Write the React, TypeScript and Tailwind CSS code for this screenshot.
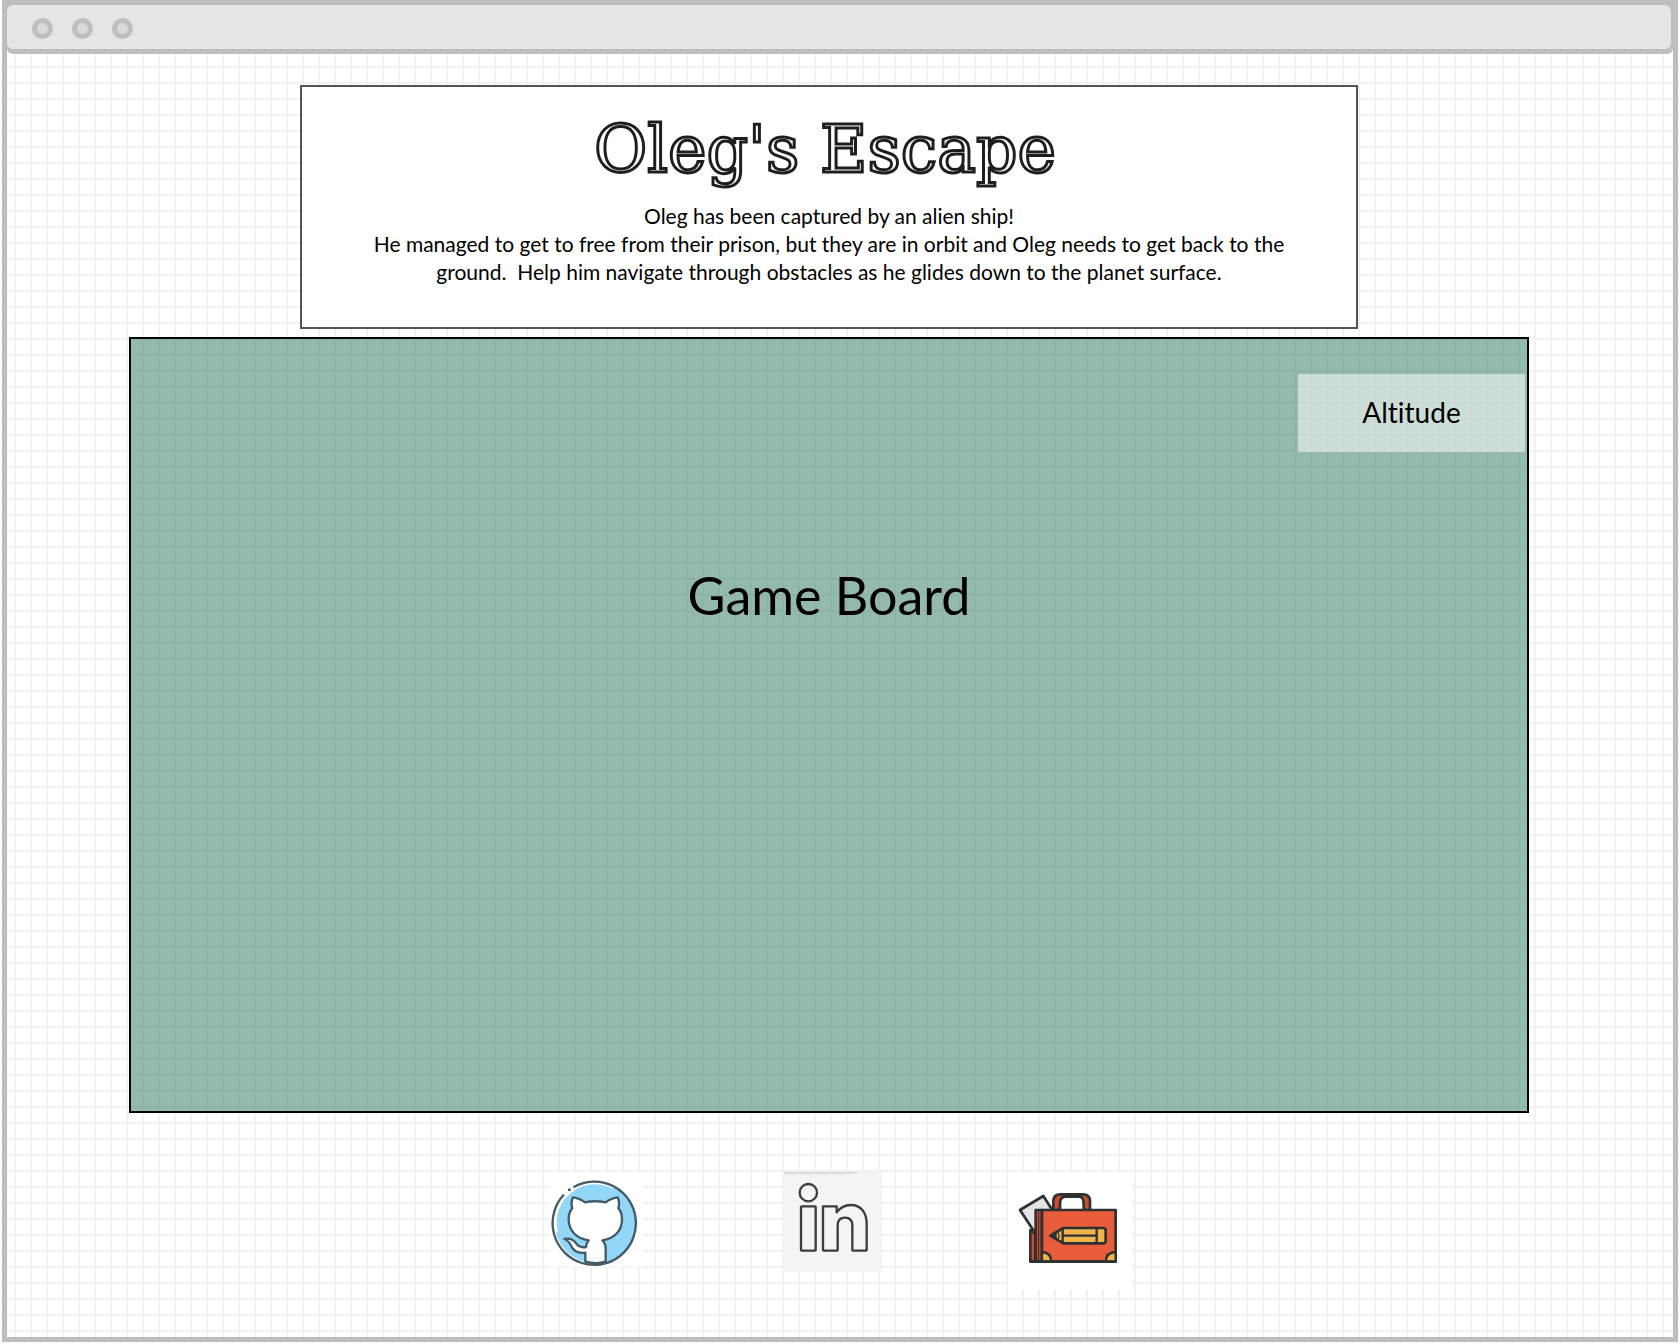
import React from "react";

function TitleBar() {
  return (
    <header className="rounded-b-[6px] bg-[#bebebe] py-[5px] pr-[2px]">
      <div className="flex h-11 items-center gap-[19px] rounded-[6px] bg-[#e5e5e5] pl-[25px] pt-[3px]">
        <span className="size-[21px] rounded-full border-5 border-[#bebebe] bg-[#d9d9d9]" />
        <span className="size-[21px] rounded-full border-5 border-[#bebebe] bg-[#d9d9d9]" />
        <span className="size-[21px] rounded-full border-5 border-[#bebebe] bg-[#d9d9d9]" />
      </div>
    </header>
  );
}

function GithubIcon() {
  return (
    <svg viewBox="22 37 285 285" className="size-[95px]" fill="none" strokeLinecap="round" strokeLinejoin="round" aria-hidden="true">
      <circle cx="164" cy="188" r="123" fill="#92d6f8" />
      <path d="M45 214A120 120 0 0 1 214 79" stroke="#fff" strokeWidth="13" />
      <path d="M134 306V279C112 282 98 273 92 260C87 248 82 242 71 238C88 234 100 241 107 252C114 263 124 264 136 262C137 253 139 247 144 242C108 237 84 214 84 178C84 164 88 154 95 146C91 135 92 124 97 113C111 114 122 120 133 128C152 124 176 124 195 128C206 120 217 114 231 113C236 124 236 136 233 146C240 154 244 164 244 178C244 214 221 237 185 242C192 248 195 256 195 266V306Q164 315 134 306Z" fill="#fff" stroke="#455a64" strokeWidth="7" />
      <path d="M68 107L101 81" stroke="#fff" strokeWidth="18" />
      <path d="M101 81A125 125 0 1 1 68 107" stroke="#455a64" strokeWidth="7" />
      <circle cx="86" cy="90" r="4.5" fill="#455a64" />
    </svg>
  );
}

function LinkedinIcon() {
  return (
    <svg viewBox="36 36 300 300" className="size-[100px]" fill="none" stroke="#3c3c3c" strokeWidth="7" strokeLinejoin="round" aria-hidden="true">
      <defs>
        <linearGradient id="edge" x1="0" y1="0" x2="0" y2="1">
          <stop offset="0" stopColor="#cfcfcf" />
          <stop offset="1" stopColor="#f4f4f4" />
        </linearGradient>
      </defs>
      <path d="M42 36H264L240 45H42Z" fill="url(#edge)" stroke="none" />
      <circle cx="115" cy="98" r="26" />
      <rect x="93" y="139" width="44" height="133" rx="2" />
      <path d="M159 139H200V157C211 142 226 135 243 135C273 135 290 158 290 192V270Q290 272 288 272H249Q247 272 247 270V197C247 181 238 173 225 173C211 173 203 182 203 197V270Q203 272 201 272H161Q159 272 159 270Z" />
    </svg>
  );
}

function BriefcaseIcon() {
  return (
    <svg viewBox="24 36 372 351" className="h-[117px] w-[124px]" fill="none" stroke="#2d3132" strokeWidth="8" strokeLinejoin="round" aria-hidden="true">
      <path d="M60 150L130 108L172 174L101 212Z" fill="#e2e4e6" />
      <path d="M160 150V124Q160 103 182 103H248Q270 103 270 124V150H251V130Q251 110 236 110H198Q180 110 180 130V150Z" fill="#cf4a30" />
      <path d="M91 210L106 222V305H91Z" fill="#cf4a30" />
      <path d="M107 150H126V305H107Z" fill="#cf4a30" />
      <path d="M126 150H347V305H126Z" fill="#e95d3a" />
      <path d="M116 152V303" strokeWidth="3" />
      <path d="M126 276Q153 277 154 305H126Z" fill="#f0b54a" strokeWidth="7" />
      <path d="M347 276Q318 277 317 305H347Z" fill="#f0b54a" strokeWidth="7" />
      <path d="M151 227L190 204H309Q317 204 317 212V242Q317 250 309 250H190Z" fill="#f0b54a" />
      <path d="M188 206V248M190 227H288M290 206V248" strokeWidth="7" />
      <path d="M151 227L170 216V238Z" fill="#2d3132" stroke="none" />
      <path d="M172 215Q182 227 172 239" strokeWidth="4" />
      <path d="M91 305H347" />
    </svg>
  );
}

export default function App() {
  return (
    <div className="flex min-h-screen bg-white px-[2px] pb-[2px] font-[Lato,sans-serif] text-black [font-variant-ligatures:none]">
      <div className="flex flex-1 flex-col border-x-5 border-b-5 border-[#bebebe] bg-white bg-[linear-gradient(#f1f1f1_2px,transparent_2px),linear-gradient(90deg,#f1f1f1_2px,transparent_2px)] bg-size-[16px_16px] bg-position-[7px_2px]">
        <TitleBar />
        <main className="flex flex-1 flex-col gap-2 pl-[122px] pr-[144px] pt-[31px]">
          <section className="mx-auto w-full max-w-[1058px] border-2 border-[#555] bg-white px-12 pb-[41px] pt-[23px] text-center">
            <h1 className="pr-2 font-['DejaVu_Serif',serif] text-[65px] leading-[80px] text-white [-webkit-text-stroke:3px_#1c1e22]">Oleg's Escape</h1>
            <p className="pt-3 text-[21px] leading-[28px]">
              Oleg has been captured by an alien ship!
              <br />
              He managed to get to free from their prison, but they are in orbit and Oleg needs to get back to the
              <br />
              ground.&nbsp; Help him navigate through obstacles as he glides down to the planet surface.
            </p>
          </section>
          <section className="relative flex flex-1 flex-col items-center border-2 border-black bg-[#4d8a7a]/60 pt-[220px]">
            <h2 className="text-[52px] leading-[72px]">Game Board</h2>
            <div className="absolute right-[2px] top-[35px] flex h-[78px] w-[227px] items-center justify-center bg-white/53 pb-[2px] text-[28px]">Altitude</div>
          </section>
        </main>
        <footer className="flex items-start justify-center pb-12 pt-[59px]">
          <a href="#github" aria-label="GitHub" className="mr-[139px] bg-white"><GithubIcon /></a>
          <a href="#linkedin" aria-label="LinkedIn" className="mr-[126px] bg-[#f4f4f4]"><LinkedinIcon /></a>
          <a href="#portfolio" aria-label="Portfolio" className="bg-white"><BriefcaseIcon /></a>
        </footer>
      </div>
    </div>
  );
}
